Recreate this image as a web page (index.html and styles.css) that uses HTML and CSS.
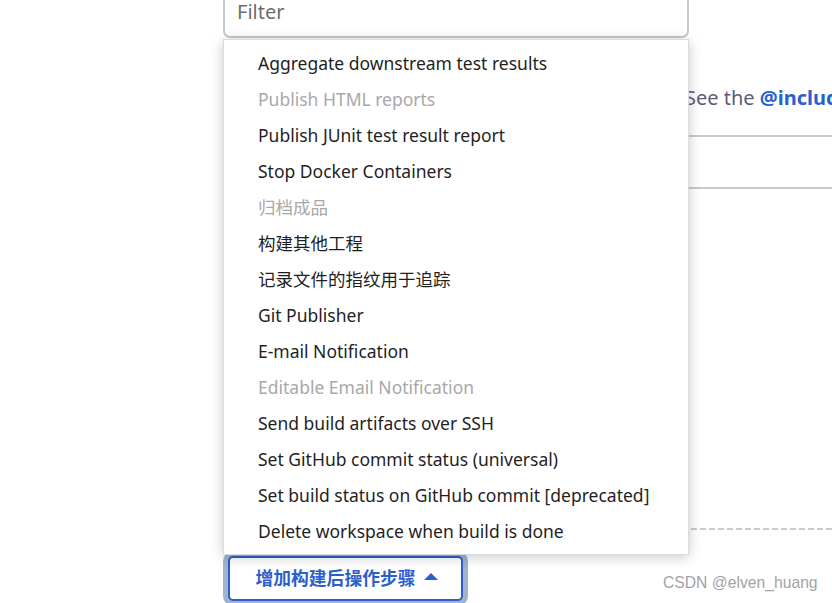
FILE: index.html
```html
<!DOCTYPE html>
<html lang="zh">
<head>
<meta charset="utf-8">
<title>Add post-build action</title>
<link rel="stylesheet" href="styles.css">
</head>
<body>
<div class="page">
  <div class="col">
    <div class="filter"><span class="filter-text">Filter</span></div>
    <div class="help">See the <b class="help-link">@include</b></div>
    <div class="field"></div>
    <div class="spacer"></div>
    <div class="dashed"></div>
    <div class="btn-row">
      <button class="add-btn">增加构建后操作步骤<span class="caret"></span></button>
    </div>

    <ul class="menu">
      <li class="item">Aggregate downstream test results</li>
      <li class="item disabled">Publish HTML reports</li>
      <li class="item">Publish JUnit test result report</li>
      <li class="item">Stop Docker Containers</li>
      <li class="item disabled">归档成品</li>
      <li class="item">构建其他工程</li>
      <li class="item">记录文件的指纹用于追踪</li>
      <li class="item">Git Publisher</li>
      <li class="item">E-mail Notification</li>
      <li class="item disabled">Editable Email Notification</li>
      <li class="item">Send build artifacts over SSH</li>
      <li class="item">Set GitHub commit status (universal)</li>
      <li class="item">Set build status on GitHub commit [deprecated]</li>
      <li class="item">Delete workspace when build is done</li>
    </ul>
  </div>
  <div class="watermark">CSDN @elven_huang</div>
</div>
</body>
</html>
```
FILE: styles.css
```css
html, body {
  margin: 0;
  padding: 0;
  background: #ffffff;
  overflow: hidden;
}
body {
  width: 832px;
  height: 603px;
  font-family: "Noto Sans", "Noto Sans CJK SC", sans-serif;
}
.page {
  position: relative;
  width: 832px;
  height: 603px;
  overflow: hidden;
}
.col {
  position: relative;
  margin-left: 223px;
  width: 620px;
  display: flex;
  flex-direction: column;
}
.filter {
  box-sizing: border-box;
  width: 466px;
  height: 50px;
  margin-top: -12px;
  border: 2px solid #c3cbd0;
  border-radius: 7px;
  padding: 8px 0 0 12px;
  background: #fff;
}
.filter-text {
  font-size: 20px;
  line-height: 28px;
  color: #6d6d6d;
}
.help {
  margin-top: 47px;
  padding-left: 462px;
  font-size: 20px;
  line-height: 26px;
  color: #5c5c78;
  white-space: nowrap;
}
.help-link {
  color: #2b5fce;
  font-weight: 700;
}
.field {
  margin-top: 24px;
  height: 50px;
  border-top: 2px solid #c4cbcf;
  border-bottom: 2px solid #c4cbcf;
}
.spacer {
  height: 339px;
}
.dashed {
  height: 2px;
  background: repeating-linear-gradient(90deg, #c6cbce 0 6px, transparent 6px 9px);
}
.btn-row {
  padding: 26px 0 0 5px;
}
.add-btn {
  box-sizing: border-box;
  height: 45px;
  width: 235px;
  display: flex;
  align-items: center;
  justify-content: center;
  gap: 8px;
  border: 2px solid #2b5fce;
  border-radius: 5px;
  background: #fff;
  box-shadow: 0 0 0 5px #9fb4cf;
  color: #2b5fce;
  font-family: "Noto Sans CJK SC", "Noto Sans", sans-serif;
  font-size: 17.8px;
  font-weight: 700;
  padding: 0 0 3px 2px;
}
.caret {
  width: 0;
  height: 0;
  border-left: 7px solid transparent;
  border-right: 7px solid transparent;
  border-bottom: 7px solid #2b5fce;
  margin-top: -2px;
}
.menu {
  position: absolute;
  left: 0;
  top: 39px;
  box-sizing: border-box;
  width: 466px;
  margin: 0;
  padding: 5px 0 5px;
  list-style: none;
  background: #fff;
  border: 1px solid #d9dcde;
  box-shadow: 0 2px 12px rgba(0, 0, 0, 0.22);
}
.item {
  height: 36px;
  line-height: 36px;
  padding-left: 34px;
  font-size: 17.5px;
  color: #1f1f1f;
  white-space: nowrap;
}
.item.disabled {
  color: #a8a8a8;
}
.watermark {
  position: absolute;
  left: 663px;
  top: 572px;
  font-family: "Liberation Sans", "Noto Sans", sans-serif;
  font-size: 15.7px;
  line-height: 22px;
  color: #a3a3a3;
  white-space: nowrap;
}
```
